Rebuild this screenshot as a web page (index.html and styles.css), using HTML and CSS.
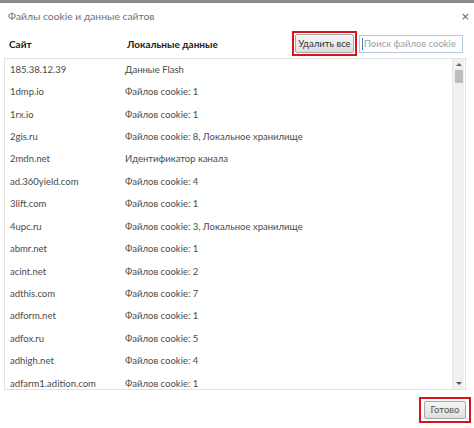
FILE: index.html
```html
<!DOCTYPE html>
<html lang="ru">
<head>
<meta charset="utf-8">
<link rel="stylesheet" href="styles.css">
</head>
<body>
<div class="topbar"></div>
<div class="dialog">
  <div class="titlebar">
    <span class="title">Файлы cookie и данные сайтов</span>
    <span class="close">×</span>
  </div>
  <div class="toolbar">
    <span class="col1 head">Сайт</span>
    <span class="col2 head">Локальные данные</span>
    <span class="mark"><button class="btn">Удалить все</button></span>
    <span class="search"><span class="caret"></span><span class="ph">Поиск файлов cookie</span></span>
  </div>
  <div class="listbox">
    <div class="rows">
      <div class="row"><span class="col1">185.38.12.39</span><span class="col2">Данные Flash</span></div>
      <div class="row"><span class="col1">1dmp.io</span><span class="col2">Файлов cookie: 1</span></div>
      <div class="row"><span class="col1">1rx.io</span><span class="col2">Файлов cookie: 1</span></div>
      <div class="row"><span class="col1">2gis.ru</span><span class="col2">Файлов cookie: 8, Локальное хранилище</span></div>
      <div class="row"><span class="col1">2mdn.net</span><span class="col2">Идентификатор канала</span></div>
      <div class="row"><span class="col1">ad.360yield.com</span><span class="col2">Файлов cookie: 4</span></div>
      <div class="row"><span class="col1">3lift.com</span><span class="col2">Файлов cookie: 1</span></div>
      <div class="row"><span class="col1">4upc.ru</span><span class="col2">Файлов cookie: 3, Локальное хранилище</span></div>
      <div class="row"><span class="col1">abmr.net</span><span class="col2">Файлов cookie: 1</span></div>
      <div class="row"><span class="col1">acint.net</span><span class="col2">Файлов cookie: 2</span></div>
      <div class="row"><span class="col1">adthis.com</span><span class="col2">Файлов cookie: 7</span></div>
      <div class="row"><span class="col1">adform.net</span><span class="col2">Файлов cookie: 1</span></div>
      <div class="row"><span class="col1">adfox.ru</span><span class="col2">Файлов cookie: 5</span></div>
      <div class="row"><span class="col1">adhigh.net</span><span class="col2">Файлов cookie: 4</span></div>
      <div class="row"><span class="col1">adfarm1.adition.com</span><span class="col2">Файлов cookie: 1</span></div>
      <div class="row"><span class="col1">adlooxtracking.com</span><span class="col2">Файлов cookie: 1</span></div>
    </div>
    <div class="scrollbar">
      <span class="arrow up"></span>
      <span class="thumb"></span>
      <span class="track"></span>
      <span class="arrow down"></span>
    </div>
  </div>
  <div class="footer">
    <span class="mark wide"><button class="btn done">Готово</button></span>
  </div>
</div>
</body>
</html>
```

FILE: styles.css
```css
html, body {
  margin: 0;
  padding: 0;
  background: #fff;
}
body {
  font-family: Lato, "Open Sans", sans-serif;
  font-size: 9.5px;
  color: #4a4a4a;
}
.topbar {
  height: 3px;
  background: #8c8c8c;
}
.dialog {
  padding: 0 8px 0 4px;
}
.titlebar {
  display: flex;
  align-items: center;
  justify-content: space-between;
  height: 26px;
  padding-left: 4px;
}
.title {
  color: #707070;
  font-size: 10.3px;
}
.close {
  color: #666;
  font-size: 11px;
  margin-right: -4px;
  font-family: "DejaVu Sans", sans-serif;
}
.toolbar {
  display: flex;
  align-items: center;
  height: 29px;
}
.col1 {
  width: 118px;
  padding-left: 5px;
  flex: none;
}
.col2 {
  flex: 1;
  white-space: nowrap;
}
.head {
  font-weight: 700;
  color: #222;
  font-size: 10px;
}
.mark {
  display: flex;
  border: 2px solid #d8131c;
  padding: 1px;
}
.mark.wide {
  padding: 2px 3px;
}
.btn {
  font-family: inherit;
  font-size: 9.5px;
  color: #333;
  height: 19px;
  width: 59px;
  padding: 0;
  border: 1px solid #a8a8a8;
  border-radius: 2px;
  background: linear-gradient(#f6f6f6, #dedede);
  line-height: 16px;
}
.search {
  display: flex;
  align-items: center;
  width: 104px;
  height: 18px;
  box-sizing: border-box;
  border: 1px solid #b8c8de;
  margin-left: 2px;
  margin-right: 3px;
  padding-left: 2px;
  overflow: hidden;
}
.caret {
  width: 1px;
  height: 12px;
  background: #4a7fd0;
  margin-right: 1px;
  flex: none;
}
.ph {
  color: #a0a0a0;
  white-space: nowrap;
}
.listbox {
  display: flex;
  height: 332px;
  box-sizing: border-box;
  border: 1px solid #e2e2e2;
  overflow: hidden;
}
.rows {
  flex: 1;
  overflow: hidden;
  margin-top: -1px;
}
.row {
  display: flex;
  align-items: center;
  height: 22.43px;
  white-space: nowrap;
}
.row .col1 {
  width: 115px;
}
.scrollbar {
  width: 11px;
  margin-right: 1px;
  display: flex;
  flex-direction: column;
  align-items: center;
  background: #f0f0f0;
  border-left: 1px solid #e6e6e6;
}
.arrow {
  width: 0;
  height: 0;
  border-left: 3px solid transparent;
  border-right: 3px solid transparent;
  margin: 4px 0;
}
.up {
  border-bottom: 3px solid #666;
}
.down {
  border-top: 3px solid #555;
}
.thumb {
  width: 8px;
  height: 13px;
  background: #bdbdbd;
}
.track {
  flex: 1;
}
.footer {
  display: flex;
  justify-content: flex-end;
  padding-top: 7px;
  margin-right: -5px;
}
.done {
  width: 42px;
  height: 18px;
  color: #555;
}
```
